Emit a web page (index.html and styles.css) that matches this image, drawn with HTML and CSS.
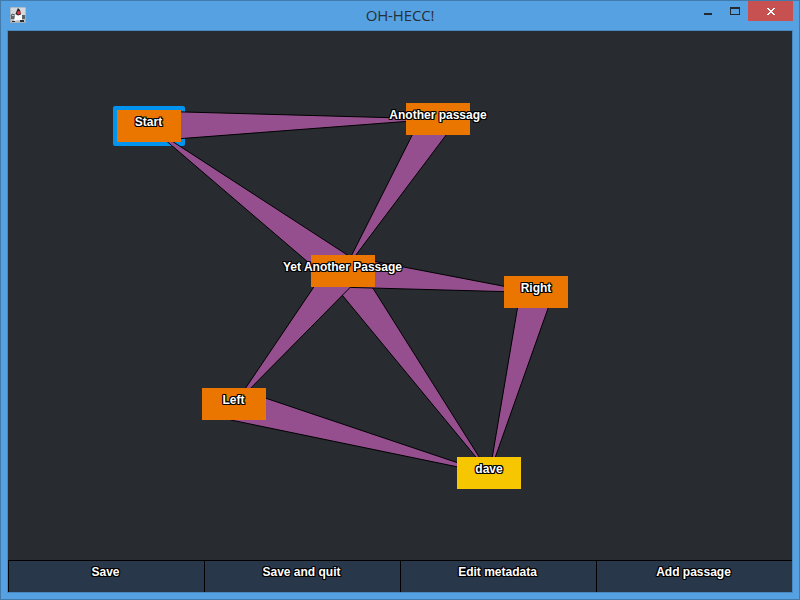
FILE: index.html
```html
<!DOCTYPE html>
<html lang="en">
<head>
<meta charset="utf-8">
<title>OH-HECC!</title>
<link rel="stylesheet" href="styles.css">
</head>
<body>
<div class="window">
  <header class="titlebar">
    <svg class="app-icon" width="16" height="16" viewBox="0 0 16 16">
      <rect width="16" height="16" fill="#d3d9de"/>
      <path d="M0 8h16v8H0z" fill="#b9bfc4"/>
      <path d="M0 0H16V16H0z" fill="none" stroke="#8c9fb0"/>
      <path d="M1 9h4v3H1zM12 8h3v4h-3z" fill="#5f6468"/>
      <path d="M8 5L5 8L4 14L8 13L12 14L12 8z" fill="#fbfbfb"/>
      <path d="M8 1L7 3L5.500 7L8 8.500L11 7.500L10 3z" fill="#242527"/>
      <path d="M2 14h3v1H2zM10 13h4v2h-4z" fill="#2c2d2f"/>
      <path d="M5 8L2 7L1 9M12 8L14 10" fill="none" stroke="#55585c"/>
      <circle cx="8.700" cy="5.700" r="1.800" fill="#e93038"/>
    </svg>
    <h1 class="title">OH-HECC!</h1>
    <div class="controls">
      <svg width="58" height="20" viewBox="0 0 58 20" shape-rendering="crispEdges">
        <rect x="14" y="12" width="8" height="2" fill="#25282c"/>
        <path d="M40 6h10v8H40zM41 8v5h8V8z" fill="#25282c" fill-rule="evenodd"/>
      </svg>
      <div class="close">
        <svg width="8" height="7" viewBox="0 0 8 7" shape-rendering="crispEdges">
          <path d="M0 0h2v1h1v1h2V1h1V0h2v1H7v1H6v1H5v1h1v1h1v1h1v1H6V6H5V5H3v1H2v1H0V6h1V5h1V4h1V3H2V2H1V1H0z" fill="#fff"/>
        </svg>
      </div>
    </div>
  </header>
  <main class="client">
    <svg class="canvas" width="784" height="529" viewBox="8 31 784 529">
      <rect class="selection" x="113" y="106" width="72" height="40" rx="2"/>
      <g class="links">
        <path d="M149.400 141L148.600 111L438 119z"/>
        <path d="M452.200 126.900L423.800 112.100L343.500 271.500z"/>
        <path d="M333.900 284.300L353.100 258.700L149.500 126.500z"/>
        <path d="M330.500 280.900L356.500 262.100L489.500 473.500z"/>
        <path d="M341.800 287.200L345.200 255.800L536.500 292.500z"/>
        <path d="M355.900 281.600L331.100 261.400L234.500 404.500z"/>
        <path d="M552.200 296.600L520.800 288.400L489.500 473.500z"/>
        <path d="M230.300 419.900L238.700 389.100L489.500 473.500z"/>
      </g>
      <g class="nodes">
        <rect x="117" y="110" width="64" height="32"/>
        <rect x="406" y="103" width="64" height="32"/>
        <rect x="311" y="255" width="64" height="32"/>
        <rect x="504" y="276" width="64" height="32"/>
        <rect x="202" y="388" width="64" height="32"/>
        <rect class="end" x="457" y="457" width="64" height="32"/>
      </g>
      <g class="label">
        <text x="148.500" y="126">Start</text>
        <text x="438" y="119">Another passage</text>
        <text x="342.500" y="271">Yet Another Passage</text>
        <text x="536" y="292">Right</text>
        <text x="233.500" y="404">Left</text>
        <text x="489" y="473">dave</text>
      </g>
    </svg>
    <nav class="actions">
      <button class="label">Save</button>
      <button class="label">Save and quit</button>
      <button class="label">Edit metadata</button>
      <button class="label">Add passage</button>
    </nav>
  </main>
</div>
</body>
</html>
```
FILE: styles.css
```css
* { box-sizing: border-box; }
body { margin: 0; }

.window {
  width: 800px;
  height: 600px;
  border: 1px solid #417bab;
  background: #55a1e1;
  display: flex;
  flex-direction: column;
}

.titlebar {
  height: 29px;
  display: grid;
  grid-template-columns: 109px 1fr 109px;
  align-items: start;
}
.app-icon { margin: 6px 0 0 9px; }
.title {
  margin: 4px 0 0;
  font: 400 15px/20px "Open Sans", sans-serif;
  letter-spacing: -0.15px;
  text-align: center;
  color: #25303b;
}
.controls { display: flex; justify-content: flex-end; padding-right: 6px; }
.controls > * { flex: none; }
.close {
  width: 45px;
  height: 20px;
  background: #c75050;
  display: flex;
  align-items: center;
  justify-content: center;
}

.client {
  width: 786px;
  height: 563px;
  margin-left: 6px;
  border: 1px solid #4688bf;
  background: #282b30;
}
.canvas { display: block; }
.selection { fill: #0094ef; }
.links path { fill: #954f8f; stroke: #000; stroke-width: 1; }
.nodes rect { fill: #ea7600; }
.nodes .end { fill: #f6c600; }

.label {
  font: bold 12px/14px "Liberation Sans", Arial, sans-serif;
  letter-spacing: 0;
  color: #fff;
  fill: #fff;
  text-anchor: middle;
  text-shadow: -1px -1px #000, 0 -1px #000, 1px -1px #000, -1px 0 #000,
    1px 0 #000, -1px 1px #000, 0 1px #000, 1px 1px #000;
}
text { text-shadow: inherit; }

.actions {
  height: 32px;
  display: grid;
  grid-template-columns: repeat(4, 1fr);
}
.actions button {
  display: flex;
  justify-content: center;
  align-items: flex-start;
  margin: 0;
  padding: 4px 2px 0 0;
  border: solid #000;
  border-width: 1px 0 0 1px;
  border-radius: 0;
  background: #29374b;
}
```
